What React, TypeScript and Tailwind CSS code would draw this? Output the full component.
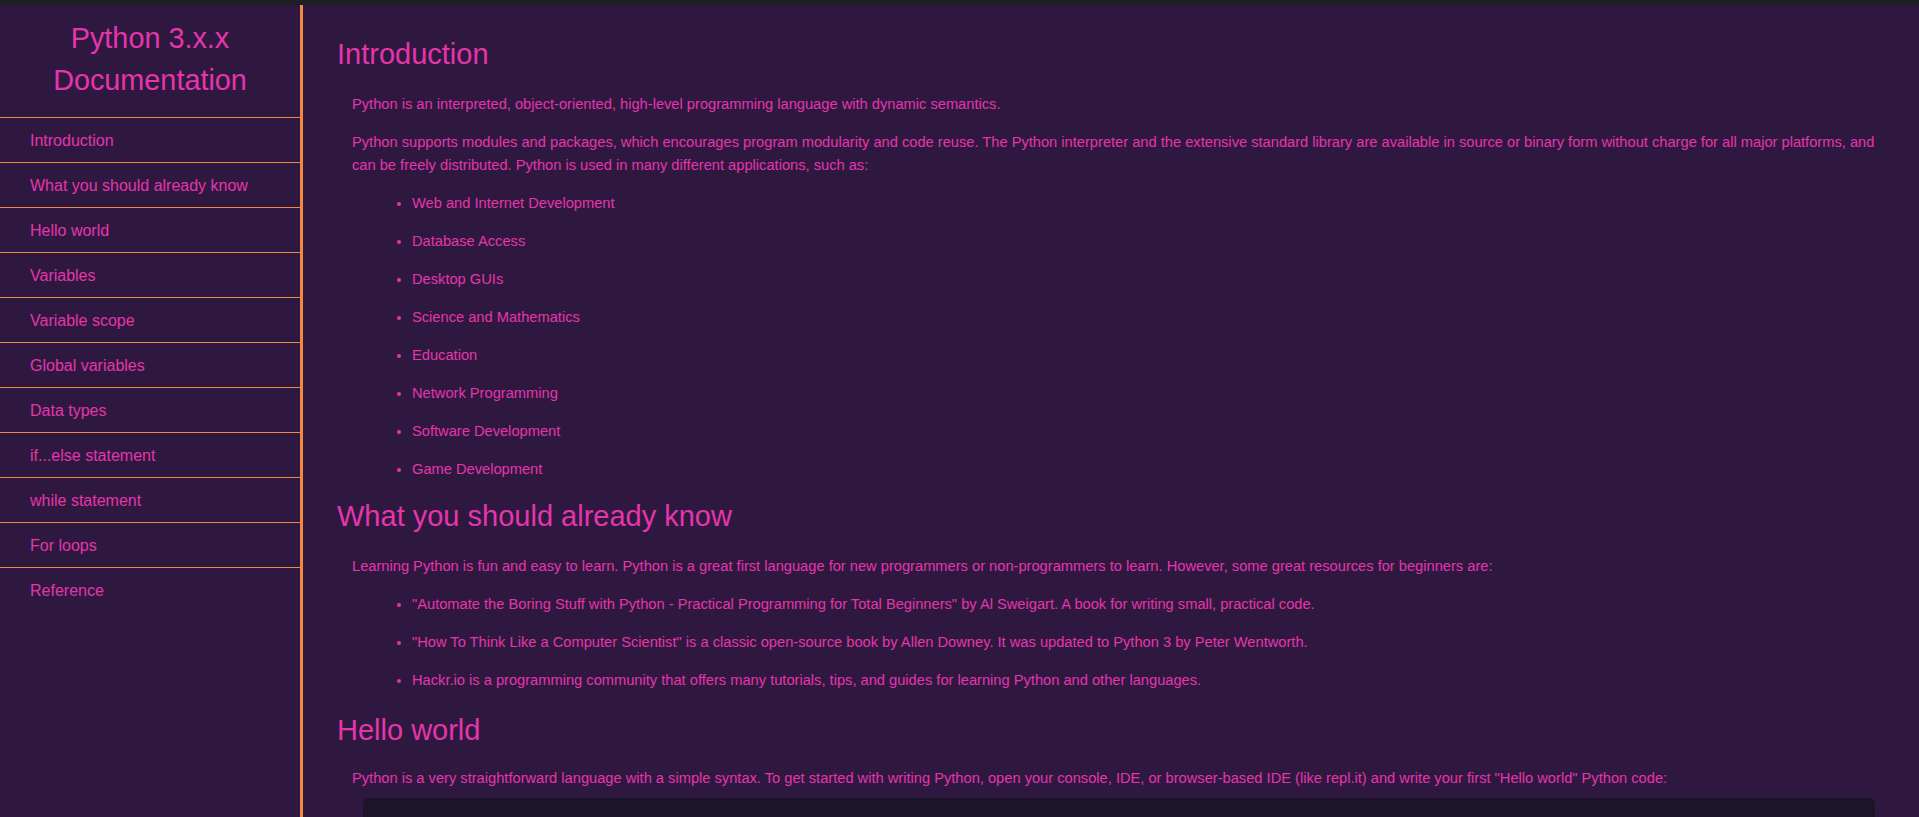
import React from "react";

const navItems = [
  "Introduction",
  "What you should already know",
  "Hello world",
  "Variables",
  "Variable scope",
  "Global variables",
  "Data types",
  "if...else statement",
  "while statement",
  "For loops",
  "Reference",
];

const introList = [
  "Web and Internet Development",
  "Database Access",
  "Desktop GUIs",
  "Science and Mathematics",
  "Education",
  "Network Programming",
  "Software Development",
  "Game Development",
];

const knowList = [
  '"Automate the Boring Stuff with Python - Practical Programming for Total Beginners" by Al Sweigart. A book for writing small, practical code.',
  '"How To Think Like a Computer Scientist" is a classic open-source book by Allen Downey. It was updated to Python 3 by Peter Wentworth.',
  "Hackr.io is a programming community that offers many tutorials, tips, and guides for learning Python and other languages.",
];

function H({ children, className = "mt-[20px] mb-[22px]" }: { children: React.ReactNode; className?: string }) {
  return <h2 className={"text-[29px] leading-[33px] font-normal " + className}>{children}</h2>;
}

function P({ children, className = "" }: { children: React.ReactNode; className?: string }) {
  return <p className={"ml-[15px] my-4 text-[14.67px] leading-[22.3px] " + className}>{children}</p>;
}

function UL({ items }: { items: string[] }) {
  return (
    <ul className="ml-[15px] pl-[60px] my-4 list-disc text-[14.67px] leading-[22px]">
      {items.map((t) => (
        <li key={t} className="my-4">
          {t}
        </li>
      ))}
    </ul>
  );
}

export default function App() {
  return (
    <div
      className="h-[817px] overflow-hidden flex flex-col bg-[#2f1840] text-[#e535ab]"
      style={{ fontFamily: '"Liberation Sans", Arial, sans-serif' }}
    >
      <div className="h-[5px] shrink-0 bg-[#1e1f24]" />
      <div className="flex flex-1 min-h-0">
        <nav className="w-[303px] shrink-0 border-r-[3px] border-[#f08a3e]">
          <header className="text-center text-[28.8px] leading-[42px] pt-[12px] pb-[16px]">
            Python 3.x.x
            <br />
            Documentation
          </header>
          <ul>
            {navItems.map((t) => (
              <li
                key={t}
                className="border-t border-[#f08a3e] pl-[30px] pt-[11px] pb-[9px] text-[16px] leading-[24px]"
              >
                {t}
              </li>
            ))}
          </ul>
        </nav>
        <main className="flex-1 min-w-0 pl-[34px] pr-[33px] pt-[13px]">
          <section>
            <H>Introduction</H>
            <P>Python is an interpreted, object-oriented, high-level programming language with dynamic semantics.</P>
            <P>
              Python supports modules and packages, which encourages program modularity and code reuse. The Python
              interpreter and the extensive standard library are available in source or binary form without charge
              for all major platforms, and can be freely distributed. Python is used in many different applications,
              such as:
            </P>
            <UL items={introList} />
          </section>
          <section>
            <H>What you should already know</H>
            <P>
              Learning Python is fun and easy to learn. Python is a great first language for new programmers or
              non-programmers to learn. However, some great resources for beginners are:
            </P>
            <UL items={knowList} />
          </section>
          <section>
            <H className="mt-[23px] mb-[20px]">Hello world</H>
            <P className="mb-0">
              Python is a very straightforward language with a simple syntax. To get started with writing Python,
              open your console, IDE, or browser-based IDE (like repl.it) and write your first "Hello world" Python
              code:
            </P>
            <pre className="mt-[9px] ml-[26px] mr-[11px] h-40 rounded-[5px] bg-[#1c1428]" />
          </section>
        </main>
      </div>
    </div>
  );
}
